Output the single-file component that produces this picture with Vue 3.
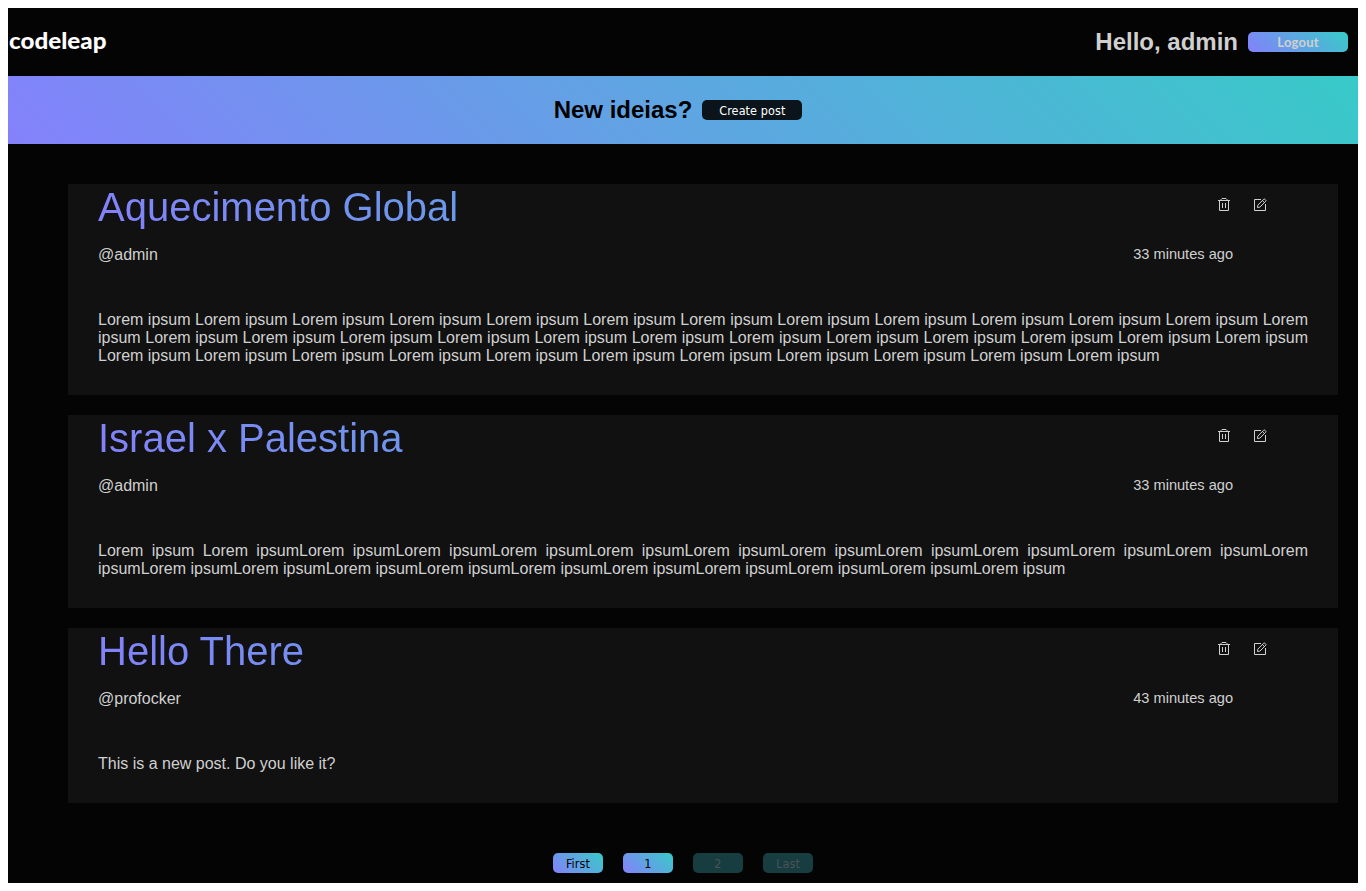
<script setup>
const repeat = (text, n) => Array(n).fill(text).join(' ')

const posts = [
  { title: 'Aquecimento Global', user: '@admin', time: '33 minutes ago', body: repeat('Lorem ipsum', 36) },
  { title: 'Israel x Palestina', user: '@admin', time: '33 minutes ago', body: 'Lorem ipsum Lorem ' + repeat('ipsumLorem', 21) + ' ipsum' },
  { title: 'Hello There', user: '@profocker', time: '43 minutes ago', body: 'This is a new post. Do you like it?' }
]
const pages = [
  { label: 'First', off: false },
  { label: '1', off: false },
  { label: '2', off: true },
  { label: 'Last', off: true }
]
</script>

<template>
  <div class="page">
    <header class="top">
      <svg class="logo" width="100" height="40" viewBox="0 0 100 40" aria-label="codeleap">
        <text x="1" y="27" textLength="97.5" lengthAdjust="spacingAndGlyphs">codeleap</text>
      </svg>
      <div class="user">
        <h2>Hello, admin</h2>
        <button class="btn logout">Logout</button>
      </div>
    </header>
    <section class="banner">
      <h2>New ideias?</h2>
      <button class="btn create">Create post</button>
    </section>
    <main class="posts">
      <article v-for="post in posts" :key="post.title" class="card">
        <div class="head">
          <h1>{{ post.title }}</h1>
          <div class="icons">
            <svg width="14" height="14" viewBox="0 0 14 14">
              <path d="M1 2.5H13M4 2.5V1.5L5 .5H9L10 1.5V2.5M2.5 2.5V12.5H11.5V2.5M5.5 5V10M8.5 5V10" />
            </svg>
            <svg width="14" height="14" viewBox="0 0 14 14">
              <path d="M8 1.5H1.5V12.5H12.5V6M4.5 9.5L4.8 7.2L10.7 1.2Q11.3.7 12 1.3L12.7 2Q13.3 2.7 12.7 3.3L6.8 9.2ZM9.4 2.5L11.5 4.6" />
            </svg>
          </div>
        </div>
        <div class="meta">
          <span>{{ post.user }}</span>
          <span class="time">{{ post.time }}</span>
        </div>
        <p>{{ post.body }}</p>
      </article>
    </main>
    <nav class="pager">
      <button v-for="p in pages" :key="p.label" class="btn page-btn" :class="{ off: p.off }">{{ p.label }}</button>
    </nav>
  </div>
</template>

<style>
body { margin: 8px; background: #fff; }
</style>

<style scoped>
.page {
  height: 875px;
  background: #040404;
  color: #d0d0d0;
  font: 16px/18px "Liberation Sans", Arial, sans-serif;
  overflow: hidden;
}
h1, h2, p { margin: 0; }
h2 { font-size: 24px; line-height: 28px; font-weight: 700; }
.top {
  height: 68px;
  display: flex;
  align-items: center;
  justify-content: space-between;
  padding-right: 10px;
  box-sizing: border-box;
}
.logo text { font: 900 22px Lato, sans-serif; fill: #fff; }
.user { display: flex; align-items: center; gap: 10px; }
.btn {
  height: 20px;
  width: 100px;
  padding: 1px 0 0;
  border: 0;
  border-radius: 5px;
  font: 12.5px/19px "DejaVu Sans Condensed", "DejaVu Sans", sans-serif;
  letter-spacing: 0.1px;
  background: linear-gradient(45deg, #8481fb, #38cac8);
  color: #000;
}
.logout { color: #d0d0d0; font: 700 13px/19px Lato, sans-serif; letter-spacing: 0.2px; }
.banner {
  height: 68px;
  box-sizing: border-box;
  padding-right: 10px;
  display: flex;
  align-items: center;
  justify-content: center;
  gap: 10px;
  color: #000;
  background: linear-gradient(45deg, #8481fb, #38cac8);
}
.banner .create { background: #0b141a; color: #fff; }
.posts { display: flex; flex-direction: column; gap: 20px; padding: 40px 20px 0 60px; }
.card { background: #111; padding: 0 30px 30px; }
.head { display: flex; justify-content: space-between; height: 61px; }
h1 {
  flex: 1;
  height: 46px;
  font-size: 40px;
  line-height: 46px;
  font-weight: 400;
  color: transparent;
  background: linear-gradient(45deg, #8481fb, #38cac8);
  -webkit-background-clip: text;
  background-clip: text;
}
.icons { display: flex; gap: 22px; padding: 14px 41px 0 0; }
.icons path { fill: none; stroke: #d0d0d0; stroke-width: 1; }
.meta { display: flex; justify-content: space-between; height: 65px; line-height: 20px; }
.time { font-size: 14.6px; line-height: 18px; margin-right: 75px; }
.card p { text-align: justify; line-height: 18px; padding-top: 1px; }
.pager { display: flex; justify-content: center; gap: 20px; padding: 50px 0 0; }
.page-btn { width: 50px; }
.off { background: #173d40; color: #4b5355; }
</style>
